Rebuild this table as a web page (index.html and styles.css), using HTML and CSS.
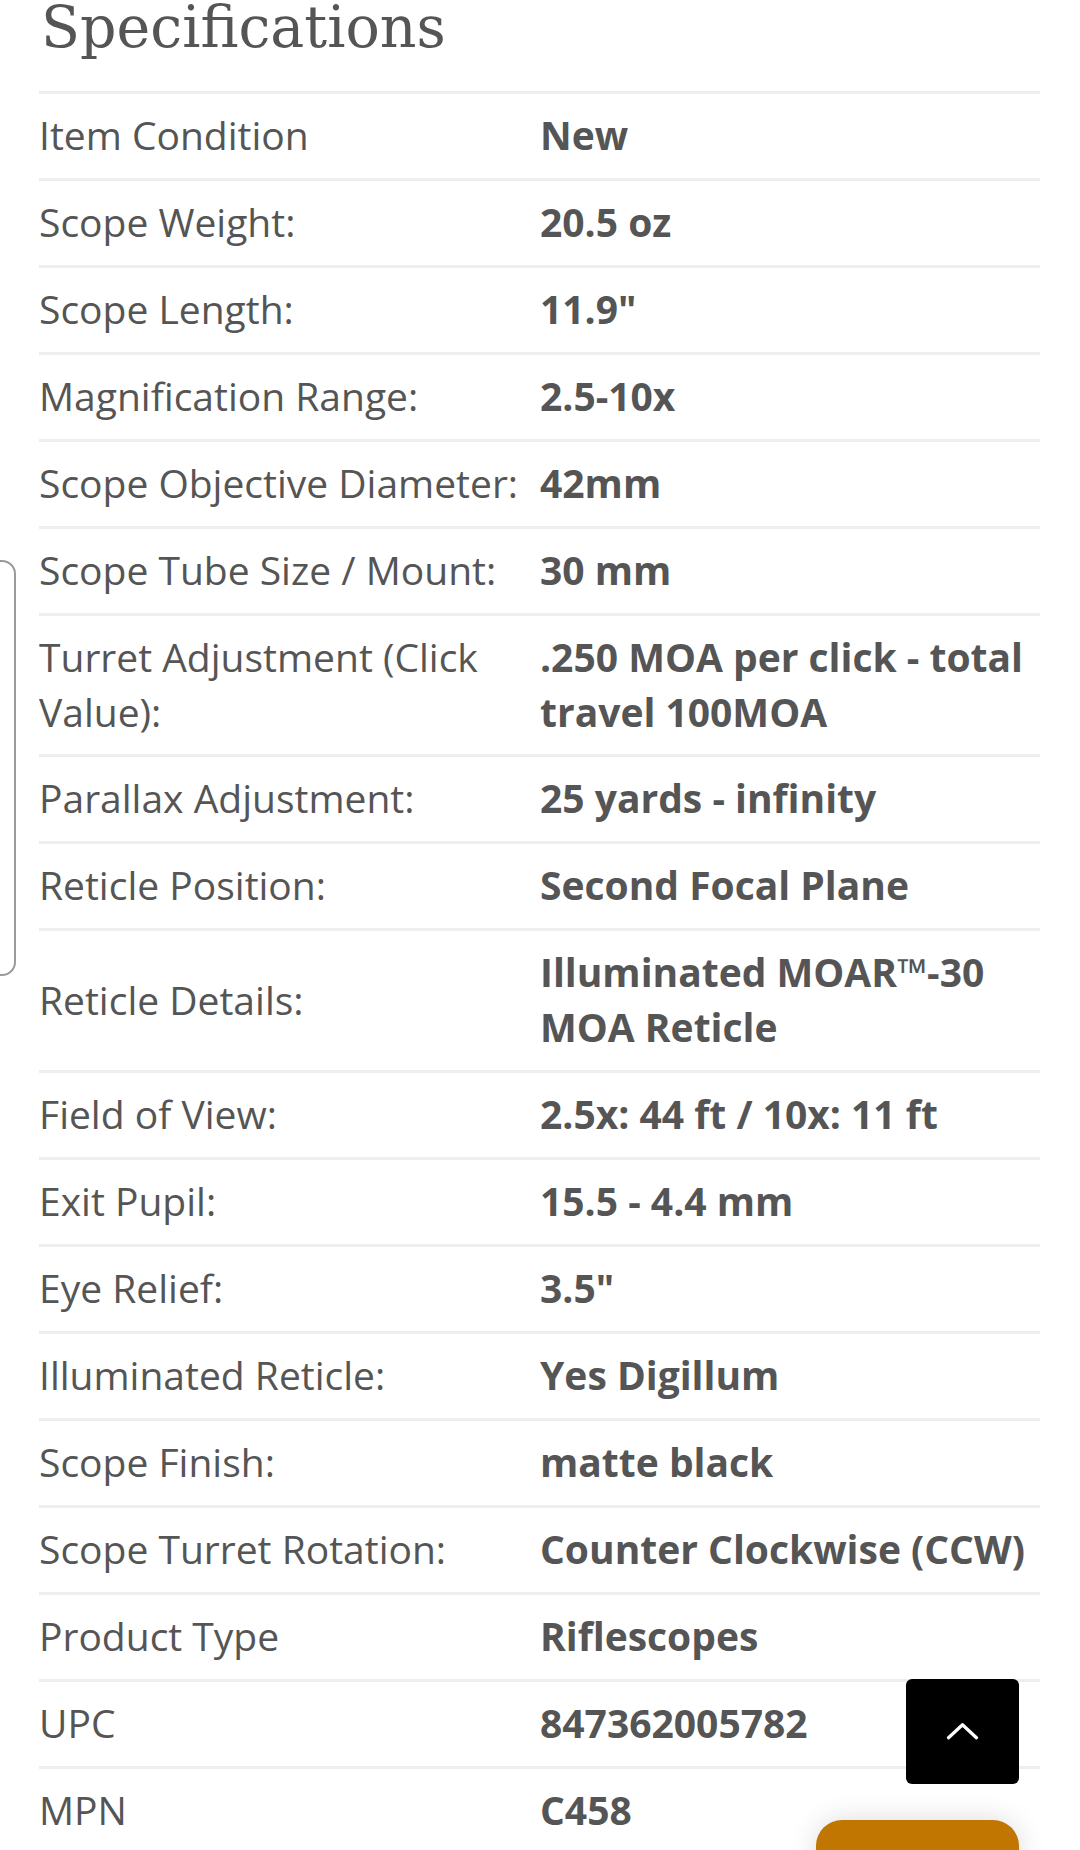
FILE: index.html
```html
<!DOCTYPE html>
<html lang="en">
<head>
<meta charset="utf-8">
<title>Specifications</title>
<link rel="stylesheet" href="styles.css">
</head>
<body>
<div class="side-tab"></div>
<main class="page">
  <h2 class="title">Specifications</h2>
  <table class="specs">
    <tbody>
      <tr><th>Item Condition</th><td>New</td></tr>
      <tr><th>Scope Weight:</th><td>20.5 oz</td></tr>
      <tr><th>Scope Length:</th><td>11.9"</td></tr>
      <tr><th>Magnification Range:</th><td>2.5-10x</td></tr>
      <tr><th>Scope Objective Diameter:</th><td>42mm</td></tr>
      <tr><th>Scope Tube Size / Mount:</th><td>30 mm</td></tr>
      <tr><th>Turret Adjustment (Click Value):</th><td>.250 MOA per click - total travel 100MOA</td></tr>
      <tr><th>Parallax Adjustment:</th><td>25 yards - infinity</td></tr>
      <tr><th>Reticle Position:</th><td>Second Focal Plane</td></tr>
      <tr><th>Reticle Details:</th><td>Illuminated MOAR™-30 MOA Reticle</td></tr>
      <tr><th>Field of View:</th><td>2.5x: 44 ft / 10x: 11 ft</td></tr>
      <tr><th>Exit Pupil:</th><td>15.5 - 4.4 mm</td></tr>
      <tr><th>Eye Relief:</th><td>3.5"</td></tr>
      <tr><th>Illuminated Reticle:</th><td>Yes Digillum</td></tr>
      <tr><th>Scope Finish:</th><td>matte black</td></tr>
      <tr><th>Scope Turret Rotation:</th><td>Counter Clockwise (CCW)</td></tr>
      <tr><th>Product Type</th><td>Riflescopes</td></tr>
      <tr><th>UPC</th><td>847362005782</td></tr>
      <tr><th>MPN</th><td>C458</td></tr>
    </tbody>
  </table>
</main>
<button class="to-top" aria-label="Back to top">
  <svg width="36" height="20" viewBox="0 0 36 20" aria-hidden="true"><polyline points="2.5,17.5 18,3 33.5,17.5" fill="none" stroke="#fff" stroke-width="3.6" stroke-linecap="round" stroke-linejoin="round"/></svg>
</button>
<div class="cart-pill"></div>
</body>
</html>
```
FILE: styles.css
```css
html, body {
  margin: 0;
  padding: 0;
  background: #fff;
}
body {
  font-family: "Open Sans", "Liberation Sans", sans-serif;
  color: #555;
  overflow: hidden;
  height: 1850px;
  position: relative;
}
.page {
  padding: 0 40px 0 39px;
}
.title {
  font-family: "DejaVu Serif", "Liberation Serif", serif;
  font-weight: normal;
  font-size: 57px;
  line-height: 54.5px;
  color: #555;
  margin: 0 0 36.5px 2px;
  letter-spacing: 0;
}
.specs {
  width: 1001px;
  border-collapse: collapse;
  font-size: 39px;
  line-height: 54.6px;
}
.specs tr {
  border-top: 3px solid #eee;
}
.specs th,
.specs td {
  padding: 14px 0 15.4px;
  vertical-align: middle;
  text-align: left;
}
.specs th {
  width: 501px;
  font-weight: normal;
  padding-right: 18px;
  box-sizing: border-box;
}
.specs td {
  font-weight: bold;
}
.side-tab {
  position: absolute;
  left: -30px;
  top: 560px;
  width: 42px;
  height: 412px;
  border: 2px solid #9a9a9a;
  border-radius: 14px;
}
.to-top {
  position: fixed;
  left: 906px;
  top: 1679px;
  width: 113px;
  height: 105px;
  background: #000;
  border: none;
  border-radius: 6px;
  padding: 0;
  display: flex;
  align-items: center;
  justify-content: center;
}
.to-top svg {
  margin-top: -2px;
  width: 33px;
  height: 18px;
}
.cart-pill {
  position: fixed;
  left: 816px;
  top: 1820px;
  width: 203px;
  height: 70px;
  background: #c07600;
  border-radius: 26px;
  box-shadow: 0 0 28px rgba(0, 0, 0, 0.14);
}
```
